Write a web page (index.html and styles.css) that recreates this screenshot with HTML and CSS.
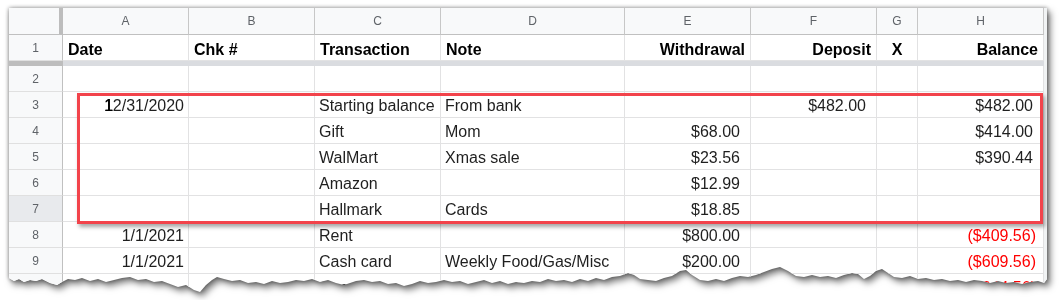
FILE: index.html
```html
<!DOCTYPE html>
<html lang="en">
<head>
    <meta charset="UTF-8">
    <meta name="viewport" content="width=device-width, initial-scale=1.0">
    <title>Checkbook register</title>
    <link rel="stylesheet" href="styles.css">
</head>
<body>
    <div class="page">
        <div class="paper">
            <div class="sheet">
                <div class="grid">
                    <!-- column letters -->
                    <div class="corner"></div>
                    <div class="col">A</div>
                    <div class="col">B</div>
                    <div class="col">C</div>
                    <div class="col">D</div>
                    <div class="col">E</div>
                    <div class="col">F</div>
                    <div class="col">G</div>
                    <div class="col">H</div>

                    <!-- row 1 : titles -->
                    <div class="rn">1</div>
                    <div class="c title">Date</div>
                    <div class="c title">Chk #</div>
                    <div class="c title">Transaction</div>
                    <div class="c title">Note</div>
                    <div class="c title right">Withdrawal</div>
                    <div class="c title right">Deposit</div>
                    <div class="c title center">X</div>
                    <div class="c title right">Balance</div>

                    <!-- frozen line -->
                    <div class="freeze-handle"></div>
                    <div class="freeze-line"></div>

                    <div class="rn">2</div>
                    <div class="c"></div><div class="c"></div><div class="c"></div><div class="c"></div>
                    <div class="c"></div><div class="c"></div><div class="c"></div><div class="c"></div>

                    <div class="rn">3</div>
                    <div class="c right"><span class="caret">1</span>2/31/2020</div>
                    <div class="c"></div>
                    <div class="c">Starting balance</div>
                    <div class="c">From bank</div>
                    <div class="c"></div>
                    <div class="c cur">$482.00</div>
                    <div class="c"></div>
                    <div class="c cur">$482.00</div>

                    <div class="rn">4</div>
                    <div class="c"></div>
                    <div class="c"></div>
                    <div class="c">Gift</div>
                    <div class="c">Mom</div>
                    <div class="c cur">$68.00</div>
                    <div class="c"></div>
                    <div class="c"></div>
                    <div class="c cur">$414.00</div>

                    <div class="rn">5</div>
                    <div class="c"></div>
                    <div class="c"></div>
                    <div class="c">WalMart</div>
                    <div class="c">Xmas sale</div>
                    <div class="c cur">$23.56</div>
                    <div class="c"></div>
                    <div class="c"></div>
                    <div class="c cur">$390.44</div>

                    <div class="rn">6</div>
                    <div class="c"></div>
                    <div class="c"></div>
                    <div class="c">Amazon</div>
                    <div class="c"></div>
                    <div class="c cur">$12.99</div>
                    <div class="c"></div>
                    <div class="c"></div>
                    <div class="c"></div>

                    <div class="rn selected">7</div>
                    <div class="c"></div>
                    <div class="c"></div>
                    <div class="c">Hallmark</div>
                    <div class="c">Cards</div>
                    <div class="c cur">$18.85</div>
                    <div class="c"></div>
                    <div class="c"></div>
                    <div class="c"></div>

                    <div class="rn">8</div>
                    <div class="c right">1/1/2021</div>
                    <div class="c"></div>
                    <div class="c">Rent</div>
                    <div class="c"></div>
                    <div class="c cur">$800.00</div>
                    <div class="c"></div>
                    <div class="c"></div>
                    <div class="c cur neg">($409.56)</div>

                    <div class="rn">9</div>
                    <div class="c right">1/1/2021</div>
                    <div class="c"></div>
                    <div class="c">Cash card</div>
                    <div class="c">Weekly Food/Gas/Misc</div>
                    <div class="c cur">$200.00</div>
                    <div class="c"></div>
                    <div class="c"></div>
                    <div class="c cur neg">($609.56)</div>

                    <div class="rn">10</div>
                    <div class="c"></div>
                    <div class="c"></div>
                    <div class="c">Gas</div>
                    <div class="c"></div>
                    <div class="c"></div>
                    <div class="c"></div>
                    <div class="c"></div>
                    <div class="c cur neg">($644.56)</div>
                </div>

                <!-- red outline drawn over rows 3-7 -->
                <div class="highlight"></div>
            </div>
        </div>
    </div>
</body>
</html>
```

FILE: styles.css
```css
body {
    margin: 0;
    background: #fff;
    font-family: 'Liberation Sans', Arial, sans-serif;
}
.page {
    padding: 8px 0 0 9px;
}
.paper {
    width: 1038px;
    filter: drop-shadow(0 0 2px rgba(0, 0, 0, 0.45)) drop-shadow(3px 4px 3px rgba(0, 0, 0, 0.5));
}
.sheet {
    position: relative;
    width: 1038px;
    height: 292px;
    overflow: hidden;
    background: #fff;
    /* torn bottom edge */
    clip-path: polygon(0 0, 0 270px, 5px 273px, 10px 271px, 15px 274px, 21px 272px, 27px 273px, 33px 271px, 41px 275px, 48px 277px, 53px 274px, 59px 271px, 66px 272px, 73px 270px, 81px 273px, 89px 271px, 97px 274px, 105px 272px, 113px 270px, 121px 269px, 129px 272px, 137px 271px, 145px 274px, 153px 273px, 161px 276px, 169px 279px, 177px 277px, 185px 282px, 191px 284px, 197px 277px, 203px 272px, 208px 269px, 215px 271px, 223px 273px, 231px 272px, 239px 275px, 247px 274px, 255px 276px, 263px 273px, 271px 275px, 279px 274px, 287px 272px, 295px 273px, 303px 271px, 311px 274px, 319px 272px, 327px 275px, 335px 277px, 341px 275px, 347px 273px, 355px 272px, 363px 274px, 371px 273px, 379px 276px, 387px 275px, 395px 278px, 403px 276px, 411px 273px, 419px 275px, 427px 274px, 435px 272px, 443px 274px, 451px 273px, 459px 276px, 467px 274px, 475px 272px, 483px 275px, 491px 273px, 499px 276px, 507px 274px, 515px 275px, 523px 273px, 531px 274px, 539px 271px, 547px 273px, 555px 272px, 563px 274px, 571px 271px, 579px 273px, 587px 270px, 595px 272px, 603px 269px, 611px 268px, 619px 265px, 625px 267px, 631px 271px, 639px 272px, 647px 273px, 655px 270px, 663px 268px, 671px 263px, 677px 262px, 683px 267px, 691px 272px, 699px 273px, 707px 271px, 715px 273px, 723px 270px, 731px 268px, 739px 269px, 747px 267px, 755px 264px, 763px 261px, 771px 259px, 779px 263px, 787px 268px, 795px 269px, 803px 267px, 811px 269px, 819px 268px, 827px 270px, 835px 267px, 843px 265px, 849px 266px, 855px 271px, 861px 268px, 867px 263px, 873px 261px, 879px 265px, 885px 269px, 893px 270px, 901px 268px, 909px 271px, 917px 270px, 925px 272px, 933px 271px, 941px 273px, 949px 272px, 957px 274px, 965px 272px, 973px 273px, 981px 275px, 989px 273px, 997px 275px, 1005px 274px, 1013px 276px, 1021px 274px, 1029px 273px, 1035px 275px, 1038px 271px, 1038px 0);
}
.grid {
    display: grid;
    grid-template-columns: 54px 126px 126px 126px 184px 126px 126px 41px 126px;
    grid-template-rows: 27px 26px 5px repeat(9, 26px);
    border-right: 3px solid #f1f3f4;
    width: 1035px;
}
.grid > div {
    box-sizing: border-box;
}
.corner {
    background: #f8f9fa;
    border-right: 4px solid #bdbdbd;
    border-bottom: 1px solid #c0c0c0;
}
.col {
    background: #f8f9fa;
    color: #5f6368;
    font-size: 12px;
    text-align: center;
    line-height: 27px;
    border-right: 1px solid #c7c7c7;
    border-bottom: 1px solid #c0c0c0;
}
.rn {
    background: #f8f9fa;
    color: #5f6368;
    font-size: 12px;
    text-align: center;
    line-height: 26px;
    border-right: 1px solid #c0c0c0;
    border-bottom: 1px solid #e0e0e0;
}
.rn.selected {
    background: #e8eaed;
}
.c {
    font-size: 16px;
    line-height: 18px;
    padding: 5px 4px 0 4px;
    color: #1f1f1f;
    white-space: nowrap;
    overflow: hidden;
    border-right: 1px solid #e2e2e3;
    border-bottom: 1px solid #e2e2e3;
}
.c.title {
    font-weight: bold;
    color: #000;
    padding-top: 6px;
    padding-left: 5px;
    padding-right: 5px;
}
.right {
    text-align: right;
}
.center {
    text-align: center;
}
.cur {
    text-align: right;
    padding-right: 10px;
}
.cur.neg {
    color: #ff0000;
    padding-right: 7px;
}
.caret {
    color: #000;
    text-shadow: 0.6px 0 0 #000;
}
.freeze-handle {
    background: #bdbdbd;
}
.freeze-line {
    grid-column: 2 / span 8;
    background: #dadce0;
}
.highlight {
    position: absolute;
    left: 68px;
    top: 85px;
    width: 966px;
    height: 131px;
    box-sizing: border-box;
    border: 3px solid #f2434b;
    box-shadow: 2px 3px 4px rgba(0, 0, 0, 0.35);
}
```
